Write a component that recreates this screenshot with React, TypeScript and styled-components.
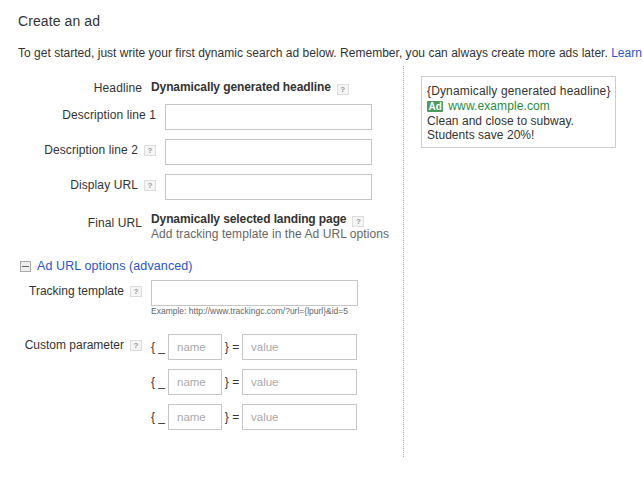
import React from "react";
import styled, {createGlobalStyle} from "styled-components";

const GlobalStyle = createGlobalStyle`
    html, body {
        margin: 0;
        padding: 0;
        width: 643px;
        height: 478px;
        overflow: hidden;
        background: #fff;
        font-family: "Liberation Sans", Arial, sans-serif;
        font-size: 12px;
        color: #333;
    }
`;

const Page = styled.div`
    width: 643px;
    height: 478px;
    padding: 13px 0 0 18px;
    box-sizing: border-box;
    overflow: hidden;
`;

const Title = styled.h1`
    margin: 0;
    font-size: 14px;
    line-height: 17px;
    font-weight: 400;
    letter-spacing: 0.1px;
`;

const Intro = styled.p`
    margin: 15px 0 0;
    line-height: 16px;
    white-space: nowrap;
    letter-spacing: 0.02px;
`;

const Link = styled.a`
    color: #2a55c8;
    text-decoration: none;
`;

const Columns = styled.div`
    display: flex;
    align-items: flex-start;
`;

const FormColumn = styled.div`
    width: 385px;
    height: 391px;
    margin-top: 5px;
    box-sizing: content-box;
    border-right: 1px dotted #aaa;
`;

const Row = styled.div<{$label: number; $top: number}>`
    display: flex;
    align-items: flex-start;
    margin-top: ${p => p.$top}px;
    & > :first-child {
        width: ${p => p.$label}px;
    }
`;

const Label = styled.div<{$pad?: number; $wide?: boolean}>`
    flex: none;
    display: flex;
    justify-content: flex-end;
    align-items: center;
    gap: 6px;
    padding-top: ${p => p.$pad ?? 0}px;
    line-height: 16px;
    white-space: nowrap;
    box-sizing: border-box;
    letter-spacing: ${p => (p.$wide ? "0.1px" : "0")};
`;

const Value = styled.div`
    margin-left: 9px;
    line-height: 15px;
    white-space: nowrap;
`;

const Strong = styled.span`
    font-weight: 700;
    letter-spacing: -0.1px;
    margin-right: 6px;
`;

const Hint = styled.div`
    color: #666;
    letter-spacing: 0.07px;
`;

const Help = styled.span`
    display: inline-flex;
    align-items: center;
    justify-content: center;
    width: 12px;
    height: 11px;
    box-sizing: border-box;
    border: 1px solid #ddd;
    background: #f5f5f5;
    color: #999;
    font-size: 8px;
    line-height: 9px;
    font-weight: 700;
    vertical-align: -1px;
`;

const Input = styled.input<{$width: number; $gap?: number}>`
    display: block;
    flex: none;
    width: ${p => p.$width}px;
    height: 26px;
    margin-left: ${p => p.$gap ?? 0}px;
    padding: 0 8px;
    box-sizing: border-box;
    border: 1px solid #c6c6c6;
    background: #fff;
    font: inherit;
    font-size: 11.5px;
    outline: none;
    &::placeholder {
        color: #aaa;
        opacity: 1;
    }
`;

const SectionHead = styled.div`
    display: flex;
    align-items: center;
    gap: 6px;
    margin: 16px 0 0 2px;
    line-height: 16px;
    font-size: 12.5px;
    color: #2a55c8;
    letter-spacing: 0.1px;
`;

const Example = styled.div`
    font-size: 8.5px;
    line-height: 11px;
    color: #666;
`;

const ParamList = styled.div`
    display: flex;
    flex-direction: column;
    gap: 9px;
    margin-left: 9px;
`;

const ParamRow = styled.div`
    display: flex;
    align-items: center;
`;

const Brace = styled.span`
    width: 17px;
    white-space: pre;
`;

const Equals = styled.span`
    width: 20px;
    text-align: center;
    white-space: pre;
`;

const Preview = styled.div`
    width: 195px;
    height: 72px;
    margin: 15px 0 0 17px;
    padding: 6px 5px;
    box-sizing: border-box;
    border: 1px solid #ccc;
    line-height: 14px;
    letter-spacing: 0.04px;
    flex: none;
`;

const AdHeadline = styled.div`
    line-height: 16px;
    white-space: nowrap;
    letter-spacing: 0.15px;
`;

const AdUrl = styled.div`
    display: flex;
    align-items: center;
    gap: 5px;
    line-height: 15px;
    color: #2a8a3c;
    letter-spacing: 0.1px;
`;

const AdBadge = styled.span`
    background: #4c9a5e;
    color: #fff;
    font-size: 10px;
    font-weight: 700;
    line-height: 11px;
    padding: 0 1.5px;
    border-radius: 1px;
    letter-spacing: 0;
`;

function CollapseIcon() {
    return (
        <svg width="11" height="11" viewBox="0 0 11 11">
            <rect x="0.5" y="0.5" width="10" height="10" fill="#eee" stroke="#aaa"/>
            <rect x="2" y="5" width="7" height="1" fill="#666"/>
        </svg>
    );
}

function ParamFields() {
    return (
        <ParamRow>
            <Brace>{"{ _"}</Brace>
            <Input $width={54} placeholder="name"/>
            <Equals>{"} ="}</Equals>
            <Input $width={115} placeholder="value"/>
        </ParamRow>
    );
}

export default function App() {
    return (
        <Page>
            <GlobalStyle/>
            <Title>Create an ad</Title>
            <Intro>
                To get started, just write your first dynamic search ad below. Remember, you can always create more ads later. <Link>Learn</Link>
            </Intro>
            <Columns>
                <FormColumn>
                    <Row $label={124} $top={14}>
                        <Label $wide>Headline</Label>
                        <Value><Strong>Dynamically generated headline</Strong><Help>?</Help></Value>
                    </Row>
                    <Row $label={138} $top={8}>
                        <Label $pad={3} $wide>Description line 1</Label>
                        <Input $width={207} $gap={9}/>
                    </Row>
                    <Row $label={138} $top={9}>
                        <Label $pad={3} $wide>Description line 2 <Help>?</Help></Label>
                        <Input $width={207} $gap={9}/>
                    </Row>
                    <Row $label={138} $top={9}>
                        <Label $pad={3} $wide>Display URL <Help>?</Help></Label>
                        <Input $width={207} $gap={9}/>
                    </Row>
                    <Row $label={124} $top={12}>
                        <Label $pad={3} $wide>Final URL</Label>
                        <Value>
                            <div><Strong>Dynamically selected landing page</Strong><Help>?</Help></div>
                            <Hint>Add tracking template in the Ad URL options</Hint>
                        </Value>
                    </Row>
                    <SectionHead><CollapseIcon/>Ad URL options (advanced)</SectionHead>
                    <Row $label={124} $top={6}>
                        <Label $pad={3}>Tracking template <Help>?</Help></Label>
                        <Value>
                            <Input $width={207}/>
                            <Example>Example: http://www.trackingc.com/?url={"{lpurl}"}&amp;id=5</Example>
                        </Value>
                    </Row>
                    <Row $label={124} $top={17}>
                        <Label $pad={3}>Custom parameter <Help>?</Help></Label>
                        <ParamList>
                            <ParamFields/>
                            <ParamFields/>
                            <ParamFields/>
                        </ParamList>
                    </Row>
                </FormColumn>
                <Preview>
                    <AdHeadline>{"{Dynamically generated headline}"}</AdHeadline>
                    <AdUrl><AdBadge>Ad</AdBadge>www.example.com</AdUrl>
                    <div>Clean and close to subway.</div>
                    <div>Students save 20%!</div>
                </Preview>
            </Columns>
        </Page>
    );
}
